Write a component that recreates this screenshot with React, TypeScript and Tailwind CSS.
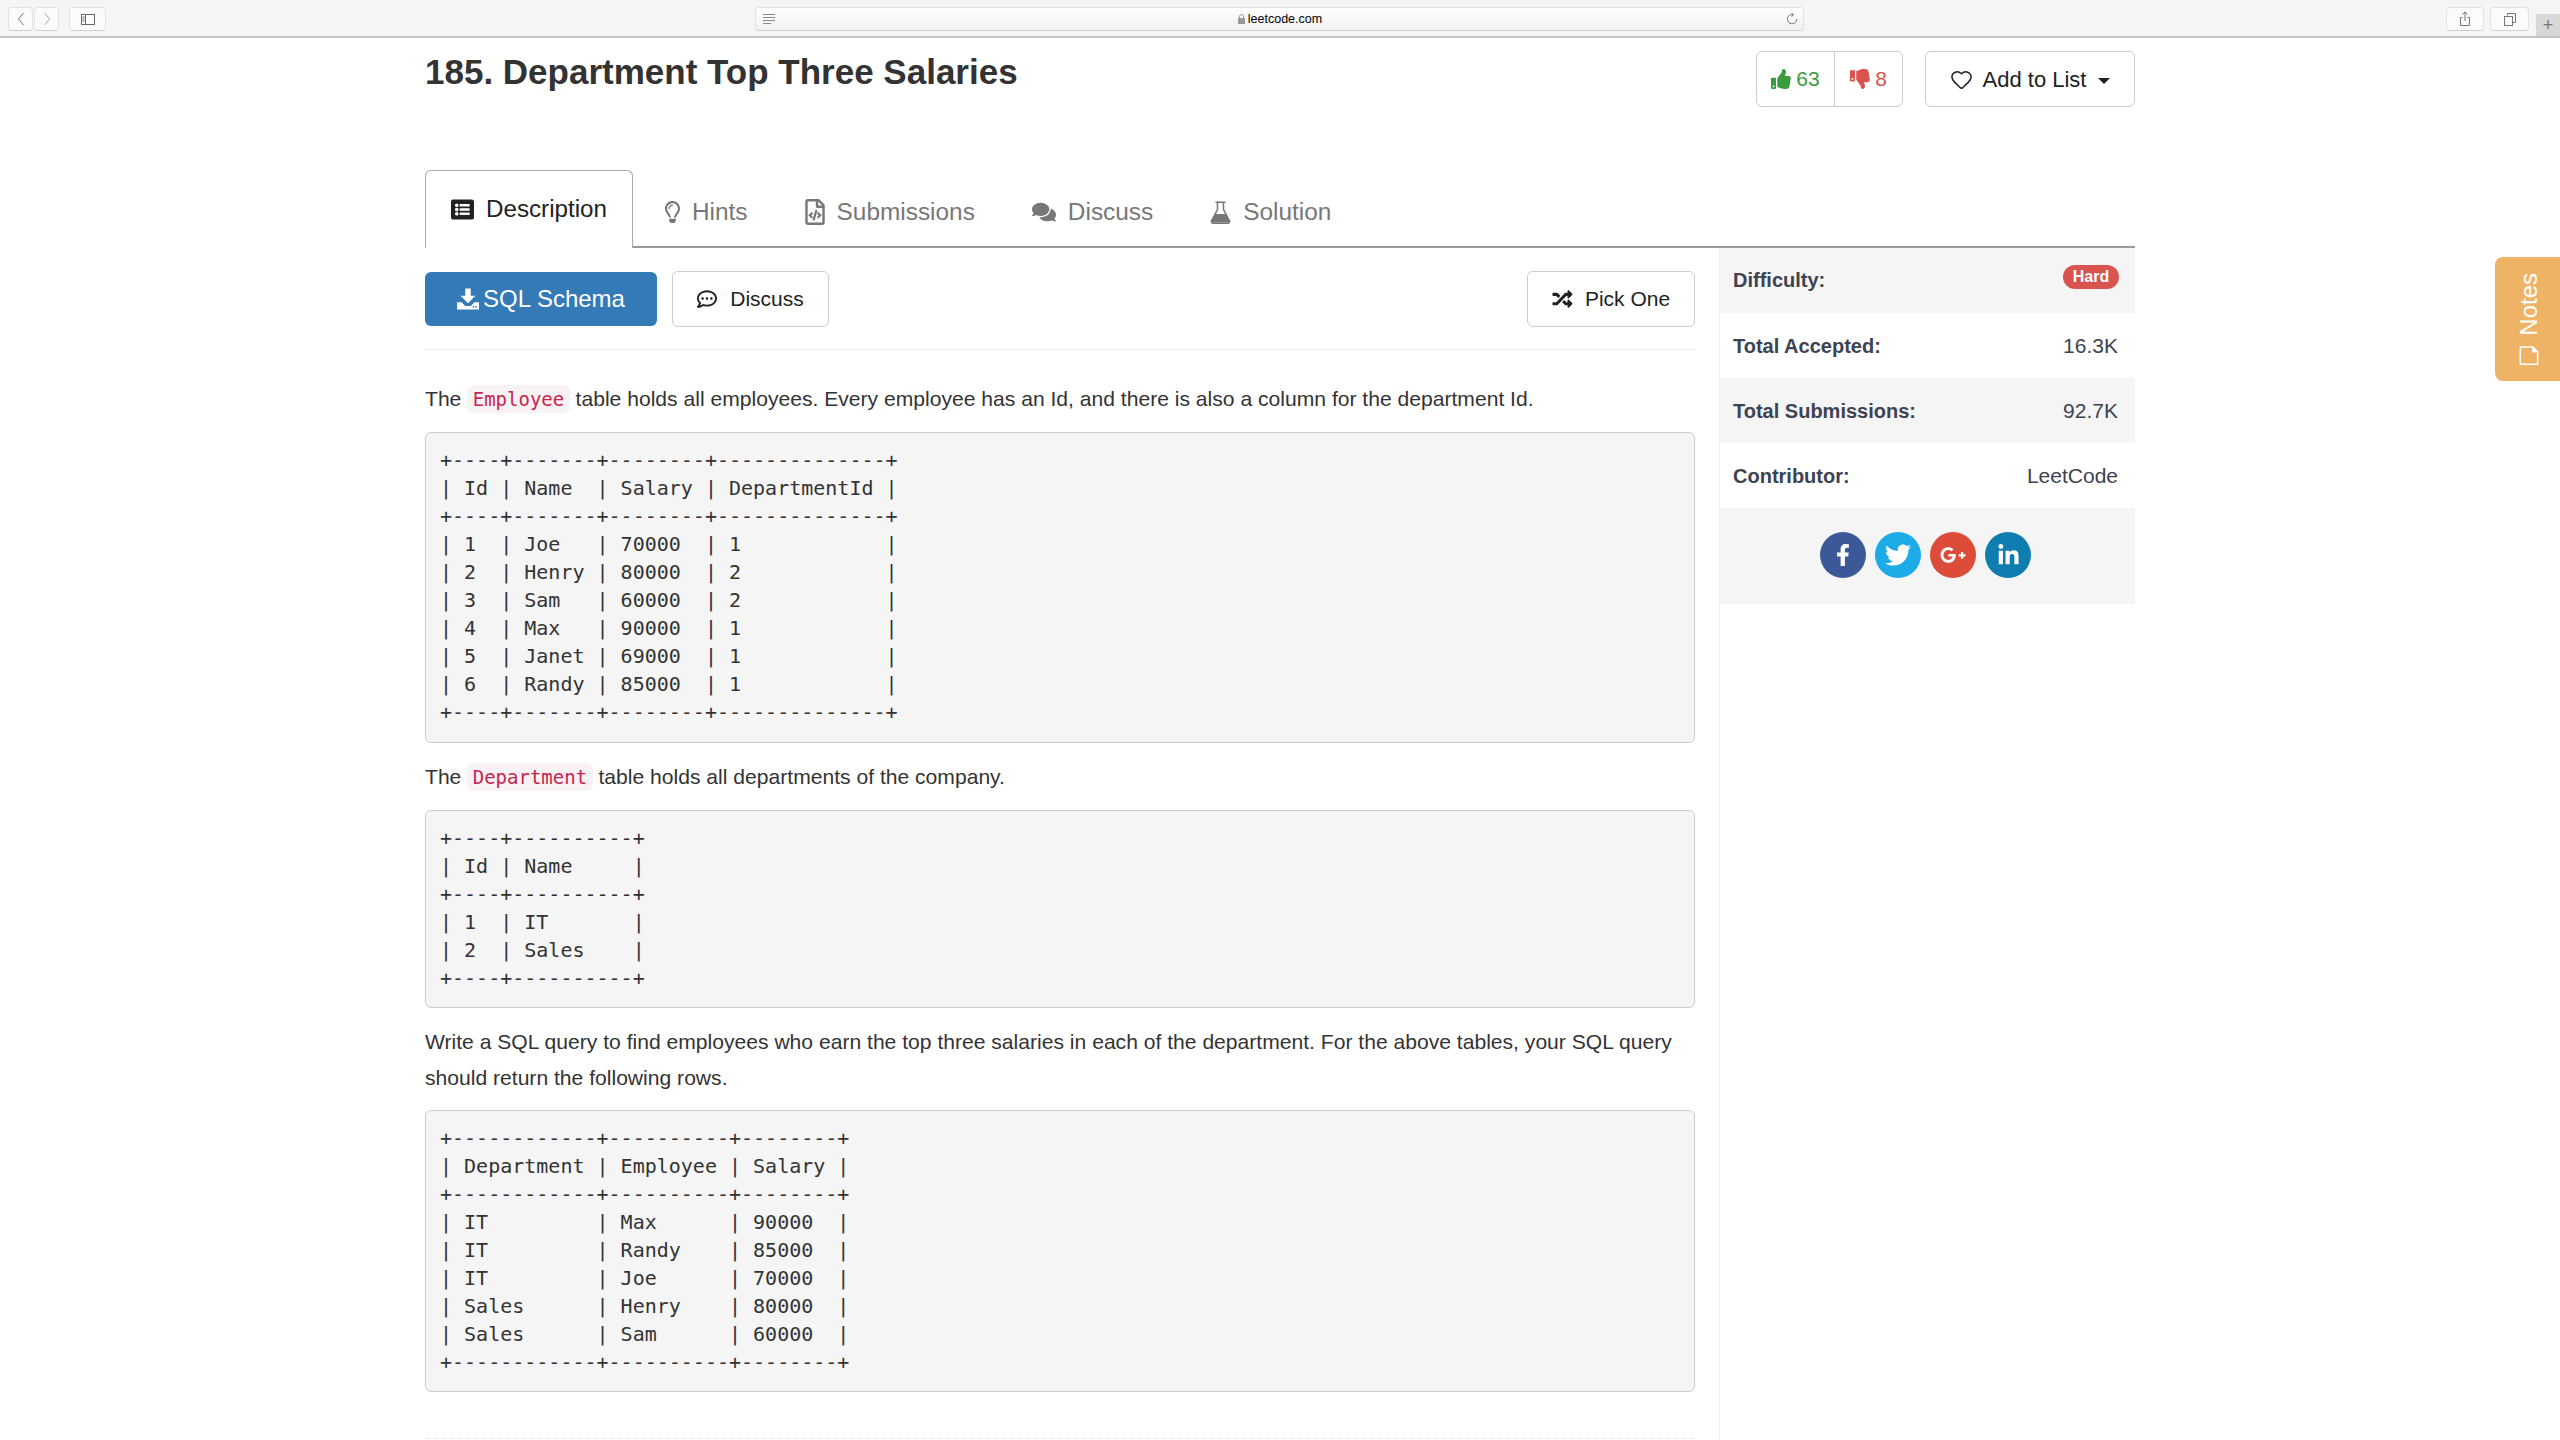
import { ReactNode } from 'react'
import { Heart } from 'lucide-react'
import {
  FaComments,
  FaFacebookF,
  FaGooglePlusG,
  FaLinkedinIn,
  FaListAlt,
  FaRandom,
  FaRegCommentDots,
  FaRegFileCode,
  FaRegLightbulb,
  FaThumbsDown,
  FaThumbsUp,
  FaTwitter,
} from 'react-icons/fa'

const employeeTable = `+----+-------+--------+--------------+
| Id | Name  | Salary | DepartmentId |
+----+-------+--------+--------------+
| 1  | Joe   | 70000  | 1            |
| 2  | Henry | 80000  | 2            |
| 3  | Sam   | 60000  | 2            |
| 4  | Max   | 90000  | 1            |
| 5  | Janet | 69000  | 1            |
| 6  | Randy | 85000  | 1            |
+----+-------+--------+--------------+`

const departmentTable = `+----+----------+
| Id | Name     |
+----+----------+
| 1  | IT       |
| 2  | Sales    |
+----+----------+`

const resultTable = `+------------+----------+--------+
| Department | Employee | Salary |
+------------+----------+--------+
| IT         | Max      | 90000  |
| IT         | Randy    | 85000  |
| IT         | Joe      | 70000  |
| Sales      | Henry    | 80000  |
| Sales      | Sam      | 60000  |
+------------+----------+--------+`

const FlaskIcon = () => (
  <svg width="21" height="23" viewBox="0 0 21 23" fill="none" stroke="currentColor" strokeWidth="1.5">
    <path d="M5.5 1.2h10M7.5 1.2v7.3L1.6 19.6c-.7 1.3.1 2.6 1.5 2.6h14.8c1.4 0 2.2-1.3 1.5-2.6L13.5 8.5V1.2" />
    <path d="M5 13h11l3.2 6.6c.5 1-.1 1.9-1.2 1.9H3c-1.1 0-1.7-.9-1.2-1.9z" fill="currentColor" stroke="none" />
  </svg>
)

const tabs: { label: string; icon: ReactNode }[] = [
  { label: 'Hints', icon: <FaRegLightbulb className="h-[22px] w-[15px]" /> },
  { label: 'Submissions', icon: <FaRegFileCode className="h-[26px] w-[20px]" /> },
  { label: 'Discuss', icon: <FaComments className="h-[24px] w-[24px]" /> },
  { label: 'Solution', icon: <FlaskIcon /> },
]

const stats = [
  { label: 'Total Accepted:', value: '16.3K', shaded: false },
  { label: 'Total Submissions:', value: '92.7K', shaded: true },
  { label: 'Contributor:', value: 'LeetCode', shaded: false },
]

const socials = [
  { color: 'bg-[#3b5998]', icon: <FaFacebookF className="h-[22px] w-[22px]" /> },
  { color: 'bg-[#1dabe8]', icon: <FaTwitter className="h-[26px] w-[26px]" /> },
  { color: 'bg-[#dd4b39]', icon: <FaGooglePlusG className="h-[26px] w-[26px]" /> },
  { color: 'bg-[#0f7db0]', icon: <FaLinkedinIn className="h-[23px] w-[23px]" /> },
]

const ToolbarButton = ({ className, children }: { className: string; children: ReactNode }) => (
  <div className={`flex h-[24px] items-center justify-center rounded-[4px] border border-[#e2e2e2] border-b-[#cfcfcf] bg-[#fbfbfb] ${className}`}>
    {children}
  </div>
)

const BrowserBar = () => (
  <div className="relative flex h-[38px] items-start border-b-2 border-[#c4c4c4] bg-[#f5f5f5] pt-[7px] pl-[8px]">
    <ToolbarButton className="w-[25px]">
      <svg width="8" height="14" viewBox="0 0 8 14" fill="none" stroke="#777" strokeWidth="1">
        <path d="M6.5 1 1.5 7l5 6" />
      </svg>
    </ToolbarButton>
    <ToolbarButton className="ml-[1px] w-[25px]">
      <svg width="8" height="14" viewBox="0 0 8 14" fill="none" stroke="#aaa" strokeWidth="1">
        <path d="m1.5 1 5 6-5 6" />
      </svg>
    </ToolbarButton>
    <ToolbarButton className="ml-[10px] w-[37px]">
      <svg width="16" height="13" viewBox="0 0 16 13" fill="none" stroke="#666" strokeWidth="1">
        <rect x="1.5" y="1.5" width="13" height="10" />
        <path d="M5.5 1.5v10" />
        <path d="M2.5 4h2M2.5 6h2M2.5 8h2" />
      </svg>
    </ToolbarButton>

    <div className="ml-[649px] flex h-[24px] w-[1049px] items-center justify-between rounded-[4px] border border-[#e2e2e2] border-b-[#cfcfcf] bg-gradient-to-b from-white to-[#f1f1f1] pr-[5px] pl-[7px]">
      <div className="flex w-[14px] flex-col gap-[2px]">
        <div className="h-[1px] w-[12px] bg-[#888]" />
        <div className="h-[1px] w-[12px] bg-[#888]" />
        <div className="h-[1px] w-[12px] bg-[#888]" />
        <div className="h-[1px] w-[8px] bg-[#888]" />
      </div>
      <div className="-ml-[3px] flex items-center gap-[3px] font-['Liberation_Sans',sans-serif] text-[12.5px] text-black">
        <svg width="7" height="10" viewBox="0 0 7 10">
          <rect y="4" width="7" height="6" fill="#999" />
          <path d="M1.5 4V2.5a2 2 0 0 1 4 0V4" fill="none" stroke="#999" />
        </svg>
        leetcode.com
      </div>
      <svg width="12" height="14" viewBox="0 0 12 14" fill="none" stroke="#777" strokeWidth="1">
        <path d="M7 2.7A4.6 4.6 0 1 0 10.6 7" />
        <path d="M5.5 1 7.6 2.7 5.5 4.6" />
      </svg>
    </div>

    <ToolbarButton className="ml-[642px] w-[38px]">
      <svg width="12" height="16" viewBox="0 0 12 16" fill="none" stroke="#777" strokeWidth="1">
        <path d="M3.5 6.5h-2v8h9v-8h-2M6 10V1M3.5 3.5 6 1l2.5 2.5" />
      </svg>
    </ToolbarButton>
    <ToolbarButton className="ml-[6px] w-[39px]">
      <svg width="14" height="15" viewBox="0 0 14 15" fill="none" stroke="#777" strokeWidth="1">
        <path d="M4.5 3.5v-2h8v9h-3" />
        <rect x="1.5" y="4.5" width="8" height="9" />
      </svg>
    </ToolbarButton>
    <div className="absolute top-[14px] right-0 flex h-[22px] w-[24px] items-center justify-center bg-[#d8d8d8] text-[18px] leading-none text-[#777]">
      +
    </div>
  </div>
)

const InlineCode = ({ children }: { children: string }) => (
  <code className="rounded-[6px] bg-[#f9f2f4] px-[5.5px] py-[3px] font-['DejaVu_Sans_Mono',monospace] text-[19px] text-[#c7254e]">
    {children}
  </code>
)

const CodeBlock = ({ className, children }: { className: string; children: string }) => (
  <pre className={`rounded-[6px] border border-[#ccc] bg-[#f5f5f5] px-[14px] pt-[13px] font-['DejaVu_Sans_Mono',monospace] text-[20px] leading-[28px] text-[#333] ${className}`}>
    {children}
  </pre>
)

const Tabs = () => (
  <div className="flex h-[78px] border-b-2 border-[#999]">
    <div className="-mb-[2px] flex h-[78px] w-[208px] items-center gap-[11px] rounded-t-[6px] border border-b-0 border-[#aaa] bg-white pb-[1px] pl-[24px] text-[24.2px] text-[#222]">
      <FaListAlt className="h-[23px] w-[25px]" />
      Description
    </div>
    {tabs.map((tab) => (
      <div
        key={tab.label}
        className="ml-[7px] flex items-center gap-[12px] px-[25px] pt-[8px] text-[24.4px] text-[#777]"
      >
        {tab.icon}
        {tab.label}
      </div>
    ))}
  </div>
)

const Sidebar = () => (
  <div className="w-[416px] border-l border-[#eee] text-[20px] text-[#3d4351]">
    <div className="flex h-[65px] items-start justify-between bg-[#f5f5f5] pt-[18px] pr-[16px] pl-[13px]">
      <b className="leading-[28px]">Difficulty:</b>
      <span className="-mt-[1px] flex h-[24px] w-[56px] items-center justify-center rounded-full bg-[#d9534f] text-[16px] font-bold text-white">
        Hard
      </span>
    </div>
    {stats.map((row) => (
      <div
        key={row.label}
        className={`flex h-[65px] items-center justify-between pr-[17px] pl-[13px] ${row.shaded ? 'bg-[#f5f5f5]' : ''}`}
      >
        <b>{row.label}</b>
        <span className="text-[21px]">{row.value}</span>
      </div>
    ))}
    <div className="flex h-[96px] items-center justify-center gap-[9px] bg-[#f5f5f5] pr-[4px] pb-[2px]">
      {socials.map((s) => (
        <div
          key={s.color}
          className={`flex h-[46px] w-[46px] items-center justify-center rounded-full text-white ${s.color}`}
        >
          {s.icon}
        </div>
      ))}
    </div>
  </div>
)

export default function App() {
  return (
    <div className="relative h-[1440px] overflow-hidden bg-white font-['Liberation_Sans',Arial,sans-serif] text-[#333]">
      <BrowserBar />

      <div className="mx-auto w-[1710px]">
        <div className="flex h-[132px] items-start justify-between pt-[13px]">
          <h1 className="text-[35px] leading-[42px] font-bold text-[#333]">
            185. Department Top Three Salaries
          </h1>
          <div className="flex gap-[22px]">
            <div className="flex h-[56px] rounded-[6px] border border-[#ccc] text-[21px]">
              <div className="flex w-[78px] items-center justify-center gap-[5px] border-r border-[#ccc] text-[#3c9a3f]">
                <FaThumbsUp className="h-[20px] w-[20px]" />
                63
              </div>
              <div className="flex w-[67px] items-center justify-center gap-[5px] text-[#d9534f]">
                <FaThumbsDown className="h-[20px] w-[20px]" />
                8
              </div>
            </div>
            <div className="flex h-[56px] w-[210px] items-center justify-center gap-[10px] rounded-[6px] border border-[#ccc] text-[22px] text-[#222]">
              <Heart size={23} strokeWidth={1.6} />
              Add to List
              <div className="mt-[3px] ml-[2px] h-0 w-0 border-x-[6px] border-t-[6px] border-x-transparent border-t-[#222]" />
            </div>
          </div>
        </div>

        <Tabs />

        <div className="flex gap-[24px]">
          <div className="w-[1270px]">
            <div className="flex items-center justify-between border-b border-dotted border-[#ddd] pt-[23px] pb-[22px]">
              <div className="flex items-center gap-[15px]">
                <div className="flex h-[54px] w-[232px] items-center justify-center gap-[4px] rounded-[6px] bg-[#337ab7] text-[24px] text-white">
                  <svg width="22" height="22" viewBox="0 0 24 23" fill="currentColor">
                    <path d="M9 0h6v8h5l-8 8-8-8h5z" />
                    <path d="M0 15h5l4 4h6l4-4h5v8H0zm17 5a1 1 0 1 0 2 0 1 1 0 1 0-2 0m3 0a1 1 0 1 0 2 0 1 1 0 1 0-2 0" fillRule="evenodd" />
                  </svg>
                  SQL Schema
                </div>
                <div className="flex h-[56px] w-[157px] items-center justify-center gap-[13px] rounded-[6px] border border-[#ccc] text-[21px] text-[#222]">
                  <FaRegCommentDots className="h-[20px] w-[20px]" />
                  Discuss
                </div>
              </div>
              <div className="flex h-[56px] w-[168px] items-center justify-center gap-[12px] rounded-[6px] border border-[#ccc] text-[21px] text-[#222]">
                <FaRandom className="h-[20px] w-[21px]" />
                Pick One
              </div>
            </div>

            <p className="mt-[31px] mb-[15px] text-[21.1px] leading-[36px]">
              The <InlineCode>Employee</InlineCode> table holds all employees. Every employee has an Id, and there is also a column for the department Id.
            </p>
            <CodeBlock className="mb-[16px] pb-[16px]">{employeeTable}</CodeBlock>

            <p className="mb-[15px] text-[21.1px] leading-[36px]">
              The <InlineCode>Department</InlineCode> table holds all departments of the company.
            </p>
            <CodeBlock className="mb-[16px] pb-[15px]">{departmentTable}</CodeBlock>

            <p className="mb-[14px] text-[21.1px] leading-[36px]">
              Write a SQL query to find employees who earn the top three salaries in each of the department. For the above tables, your SQL query should return the following rows.
            </p>
            <CodeBlock className="pb-[15px]">{resultTable}</CodeBlock>

            <div className="mt-[46px] border-b border-dotted border-[#ddd]" />
          </div>

          <div className="flex flex-col self-stretch">
            <Sidebar />
            <div className="h-[900px] w-[416px] border-l border-[#eee]" />
          </div>
        </div>
      </div>

      <div className="absolute top-[257px] right-0 flex h-[124px] w-[65px] flex-col-reverse items-center justify-start gap-[10px] rounded-l-[8px] bg-[#efb366] pt-[16px] pb-[16px] pl-[3px] text-white">
        <svg width="20" height="20" viewBox="0 0 20 20" fill="none" stroke="currentColor" strokeWidth="1.5">
          <path d="M1 1h13l5 5v13H1z" />
          <path d="M14 1v5h5" fill="currentColor" />
        </svg>
        <span className="rotate-180 text-[24px] leading-none [writing-mode:vertical-rl]">Notes</span>
      </div>
    </div>
  )
}
